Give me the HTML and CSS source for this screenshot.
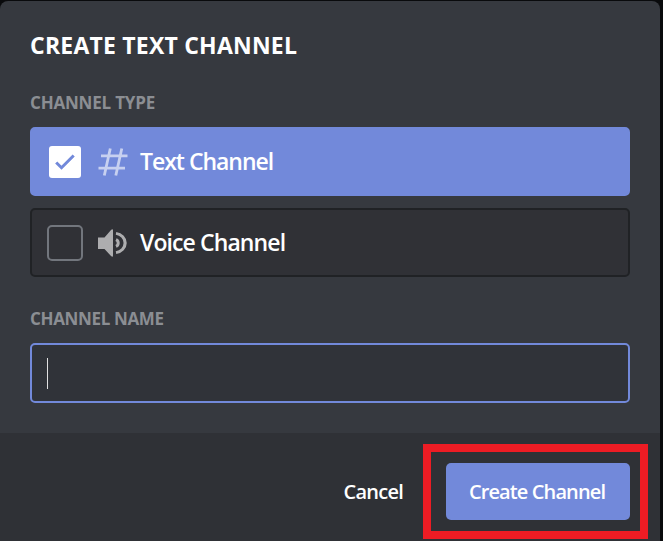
FILE: index.html
```html
<!DOCTYPE html>
<html lang="en">
<head>
<meta charset="utf-8">
<title>Create Text Channel</title>
<link rel="stylesheet" href="styles.css">
</head>
<body>
<form class="modal">
  <div class="body">
    <h1 class="title"><span>Create Text Channel</span></h1>
    <h2 class="label label-type"><span>Channel Type</span></h2>
    <div class="option selected">
      <span class="check"><svg width="32" height="32" viewBox="0 0 32 32"><path d="M7.2 16.5 12.5 21.7 24.7 9.5" fill="none" stroke="#7289da" stroke-width="3"/></svg></span>
      <svg class="icon" width="30" height="30" viewBox="0 0 30 30"><path d="M12.3 1.5 6.3 28.5M23.8 1.5 17.8 28.5M3 8.8H29.5M0.5 21.2H27" fill="none" stroke="#c7d0f0" stroke-width="2.8"/></svg>
      <span class="name name-text">Text Channel</span>
    </div>
    <div class="option voice">
      <span class="check"></span>
      <svg class="icon" width="30" height="30" viewBox="0 0 30 30"><path d="M0 9.5H6.5L13 2Q15 .2 15 2.5V27.5Q15 29.8 13 28L6.5 21H0Z" fill="#adadaf"/><path d="M18 11.6A3.7 3.7 0 0 1 18 18.4" fill="none" stroke="#adadaf" stroke-width="3"/><path d="M18 5.4A9.7 9.7 0 0 1 18 24.6" fill="none" stroke="#adadaf" stroke-width="2.9" transform="translate(-1.8 0) scale(1.1 1)"/></svg>
      <span class="name name-voice">Voice Channel</span>
    </div>
    <h2 class="label label-name"><span>Channel Name</span></h2>
    <div class="field"><span class="caret"></span></div>
  </div>
  <div class="footer">
    <span class="cancel">Cancel</span>
    <div class="highlight"><button class="create" type="button"><span>Create Channel</span></button></div>
  </div>
</form>
</body>
</html>
```
FILE: styles.css
```css
* { box-sizing: border-box; }
body { margin: 0; padding-top: 1px; width: 663px; height: 541px; overflow: hidden; background: #090a0c; font-family: "Open Sans", "Noto Sans", sans-serif; color: #fff; }
.modal { width: 660px; height: 540px; display: flex; flex-direction: column; background: #36393f; border-radius: 8px 8px 0 0; overflow: hidden; white-space: nowrap; }
.body { height: 432px; padding: 28px 30px 0; }
.title { margin: 0; height: 34px; line-height: 32px; font-size: 23px; font-weight: 700; text-transform: uppercase; letter-spacing: 0.22px; }
.label { margin: 0; height: 24px; line-height: 24px; font-size: 17px; font-weight: 700; color: #8b8e93; text-transform: uppercase; letter-spacing: -0.2px; }
.label-type { margin-top: 28px; }
.option { width: 600px; height: 69px; margin-top: 12px; display: flex; align-items: center; border-radius: 5px; border: 2px solid #202225; background: #303136; padding-left: 15px; }
.selected { border-color: #7289da; background: #7289da; padding-left: 17px; }
.check { width: 36px; height: 36px; border: 2px solid #72767d; border-radius: 5px; margin-right: 15px; flex: none; }
.selected .check { width: 32px; height: 32px; border: 0; border-radius: 3px; background: #fff; margin-right: 17px; }
.check svg, .icon { display: block; flex: none; }
.icon { margin-right: 12px; }
.name { position: relative; top: -1px; font-size: 23px; font-weight: 600; line-height: 32px; letter-spacing: -1.02px; }
.name-voice { letter-spacing: -0.9px; }
.label-name { margin-top: 30px; letter-spacing: -0.35px; }
.field { width: 600px; height: 60px; margin-top: 12px; border: 2px solid #7289da; border-radius: 5px; background: #303339; padding: 13px 15px; }
.caret { display: block; width: 1px; height: 31px; background: #e0e0e1; }
.footer { height: 108px; background: #2f3136; display: flex; justify-content: flex-end; align-items: flex-start; padding: 11px 12px 0 0; }
.cancel { font-size: 20px; font-weight: 600; line-height: 30px; margin: 33px 20px 0 0; letter-spacing: -0.75px; }
.highlight { width: 225px; height: 95px; border: 8px solid #ed1c24; padding: 11px 10px 11px 15px; }
.create { display: block; width: 184px; height: 57px; padding: 0 2px 0 0; border: 0; border-radius: 5px; background: #7289da; color: #fff; font: 600 20px/57px "Open Sans", "Noto Sans", sans-serif; letter-spacing: -0.88px; }
```
